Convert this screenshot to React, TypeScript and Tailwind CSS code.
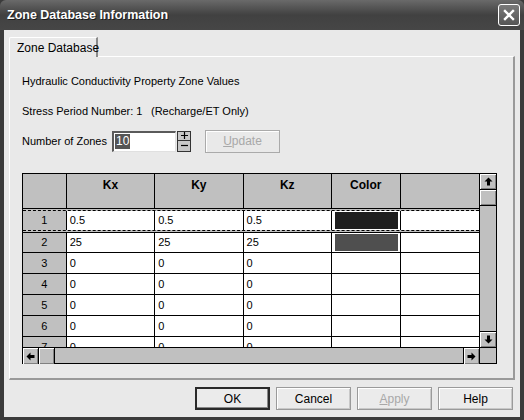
import React from "react";

const font = { fontFamily: '"Liberation Sans", Arial, sans-serif' };

function Arrow({ dir }: { dir: "up" | "down" | "left" | "right" }) {
  const rot = { up: 0, right: 90, down: 180, left: 270 }[dir];
  return (
    <svg width="9" height="9" viewBox="0 0 9 9" style={{ transform: `rotate(${rot}deg)` }}>
      <path d="M4.5 0.5 L8.5 4.5 H6 V8.5 H3 V4.5 H0.5 Z" fill="#000" />
    </svg>
  );
}

function SBtn({ children, className = "" }: { children?: React.ReactNode; className?: string }) {
  return (
    <div
      className={
        "w-[16px] h-[16px] bg-[#c0c0c0] border-black flex items-center justify-center shadow-[inset_1px_1px_0_#fff,inset_-1px_-1px_0_#808080] " +
        className
      }
    >
      {children}
    </div>
  );
}

const cols = [
  { name: "Kx", w: "w-[89px]" },
  { name: "Ky", w: "w-[89px]" },
  { name: "Kz", w: "w-[89px]" },
  { name: "Color", w: "w-[69px]" },
  { name: "", w: "w-[79px]" },
];

const rows = [
  { n: "1", v: "0.5", color: "#1e1e1e" },
  { n: "2", v: "25", color: "#4f4f4f" },
  { n: "3", v: "0" },
  { n: "4", v: "0" },
  { n: "5", v: "0" },
  { n: "6", v: "0" },
  { n: "7", v: "0" },
];

function WinButton({ label, ul, isDefault, disabled }: { label: string; ul?: boolean; isDefault?: boolean; disabled?: boolean }) {
  return (
    <div
      className={
        "w-[75px] h-[23px] flex items-center justify-center text-[12px] bg-[#ebebeb] whitespace-nowrap " +
        (isDefault
          ? "border-2 border-[#2a2a2a] shadow-[inset_-1px_-1px_0_#888]"
          : "border border-[#9a9a9a] shadow-[inset_1px_1px_0_#fff,inset_-1px_-1px_0_#c8c8c8]") +
        (disabled ? " text-[#a8a8a8]" : " text-black")
      }
    >
      {ul ? (
        <span>
          <span className="underline">{label[0]}</span>
          {label.slice(1)}
        </span>
      ) : (
        label
      )}
    </div>
  );
}

export default function App() {
  return (
    <div className="w-[524px] h-[420px] bg-[#3b3b3b] flex flex-col select-none" style={font}>
      {/* Title bar */}
      <div className="h-[30px] shrink-0 flex items-center justify-between pl-[7px] pr-[4px] bg-gradient-to-b from-[#6a6a6a] via-[#414141] to-[#464646] rounded-t-[6px]">
        <span
          className="text-white font-bold text-[12.5px] whitespace-nowrap"
          style={{ textShadow: "1px 1px 0 #1a1a1a" }}
        >
          Zone Database Information
        </span>
        <div className="w-[22px] h-[22px] rounded-[3px] border border-white bg-gradient-to-b from-[#7a7a7a] to-[#555] flex items-center justify-center">
          <svg width="12" height="12" viewBox="0 0 12 12">
            <path d="M2 2 L10 10 M10 2 L2 10" stroke="#fff" strokeWidth="2.4" strokeLinecap="square" />
          </svg>
        </div>
      </div>

      {/* Body */}
      <div className="flex-1 mx-[4px] mb-[3px] bg-[#e9e9e9] flex flex-col pt-[7px] px-[5px] text-[11px] text-black whitespace-nowrap">
        {/* Tab */}
        <div className="flex">
          <div className="h-[20px] w-[89px] border-t border-l border-white border-r-2 border-r-[#8a8a8a] rounded-tl-[2px] flex items-center pl-[7px] text-[12px] bg-[#e9e9e9] relative z-10 -mb-[1px]">
            Zone Database
          </div>
        </div>
        {/* Panel */}
        <div className="w-[506px] h-[324px] border-t border-l border-white border-r-2 border-b-2 border-r-[#999] border-b-[#999] flex flex-col pl-[12px]">
          <div className="mt-[17px] h-[14px] leading-[14px]">Hydraulic Conductivity Property Zone Values</div>
          <div className="mt-[16px] h-[14px] leading-[14px] flex">
            <span className="w-[129px]">Stress Period Number: 1</span>
            <span>(Recharge/ET Only)</span>
          </div>
          <div className="mt-[12px] flex items-center h-[22px]">
            <span className="w-[90px]">Number of Zones</span>
            <div className="w-[64px] h-[21px] bg-white border-t-2 border-l-2 border-[#5a5a5a] border-b border-r border-b-[#e0e0e0] border-r-[#e0e0e0] flex items-center pl-[1px]">
              <span className="bg-[#555] text-white leading-[15px] px-[1px] text-[12px]">10</span>
            </div>
            <div className="w-[14px] h-[21px] flex flex-col ml-[1px]">
              <div className="h-[10px] bg-[#c8c8c8] border border-[#333] flex items-center justify-center">
                <svg width="7" height="7" viewBox="0 0 7 7">
                  <path d="M0 3.5 H7 M3.5 0 V7" stroke="#000" strokeWidth="1.2" />
                </svg>
              </div>
              <div className="h-[11px] bg-[#c8c8c8] border border-[#333] border-t-0 flex items-center justify-center">
                <svg width="7" height="7" viewBox="0 0 7 7">
                  <path d="M0 3.5 H7" stroke="#000" strokeWidth="1.2" />
                </svg>
              </div>
            </div>
            <div className="ml-[14px] w-[75px] h-[23px] border border-[#aaa] shadow-[inset_1px_1px_0_#fff] flex items-center justify-center text-[#a8a8a8] text-[12px]">
              <span>
                <span className="underline">U</span>pdate
              </span>
            </div>
          </div>

          {/* Grid */}
          <div className="mt-[21px] w-[475px] h-[191px] border border-black flex flex-col bg-[#c0c0c0]">
            <div className="flex h-[173px]">
              <div className="w-[458px] overflow-hidden flex flex-col">
                {/* header */}
                <div className="flex h-[35px] shrink-0 border-b border-black">
                  <div className="w-[44px] border-r border-black" />
                  {cols.map((c, i) => (
                    <div
                      key={i}
                      className={c.w + " text-center font-bold text-[12px] pt-[2px] " + (i === 4 ? "" : "border-r border-black")}
                    >
                      {c.name}
                    </div>
                  ))}
                </div>
                {rows.map((r, ri) => (
                  <div
                    key={ri}
                    className={
                      "flex shrink-0 h-[21px] border-b " +
                      (ri === 0
                        ? "border-t border-dashed border-black mt-[1px]"
                        : ri === 1
                        ? "border-t border-black mt-[1px]"
                        : "border-black")
                    }
                  >
                    <div className="w-[44px] border-r border-black flex items-center justify-center bg-[#c0c0c0]">
                      {r.n}
                    </div>
                    {cols.map((c, ci) => (
                      <div
                        key={ci}
                        className={c.w + " bg-white flex items-center pl-[3px] " + (ci === 4 ? "" : "border-r border-black")}
                      >
                        {ci < 3 ? r.v : null}
                        {ci === 3 && r.color ? (
                          <div className="w-[63px] h-[17px]" style={{ background: r.color }} />
                        ) : null}
                      </div>
                    ))}
                  </div>
                ))}
              </div>
              {/* vertical scrollbar */}
              <div className="w-[17px] border-l border-black flex flex-col justify-between bg-[#c0c0c0]">
                <div className="flex flex-col">
                  <SBtn className="border-b">
                    <Arrow dir="up" />
                  </SBtn>
                  <SBtn className="border-b" />
                </div>
                <SBtn className="border-t">
                  <Arrow dir="down" />
                </SBtn>
              </div>
            </div>
            {/* horizontal scrollbar */}
            <div className="flex h-[16px] border-t border-black">
              <div className="w-[458px] flex justify-between">
                <div className="flex">
                  <SBtn className="border-r h-[15px]">
                    <Arrow dir="left" />
                  </SBtn>
                  <SBtn className="border-r h-[15px]" />
                </div>
                <SBtn className="border-l h-[15px]">
                  <Arrow dir="right" />
                </SBtn>
              </div>
              <div className="w-[17px] border-l border-black bg-[#c0c0c0]" />
            </div>
          </div>
        </div>

        {/* Buttons */}
        <div className="flex justify-end gap-[6px] mt-[7px] pr-[2px]">
          <WinButton label="OK" isDefault />
          <WinButton label="Cancel" />
          <WinButton label="Apply" ul disabled />
          <WinButton label="Help" />
        </div>
      </div>
    </div>
  );
}
